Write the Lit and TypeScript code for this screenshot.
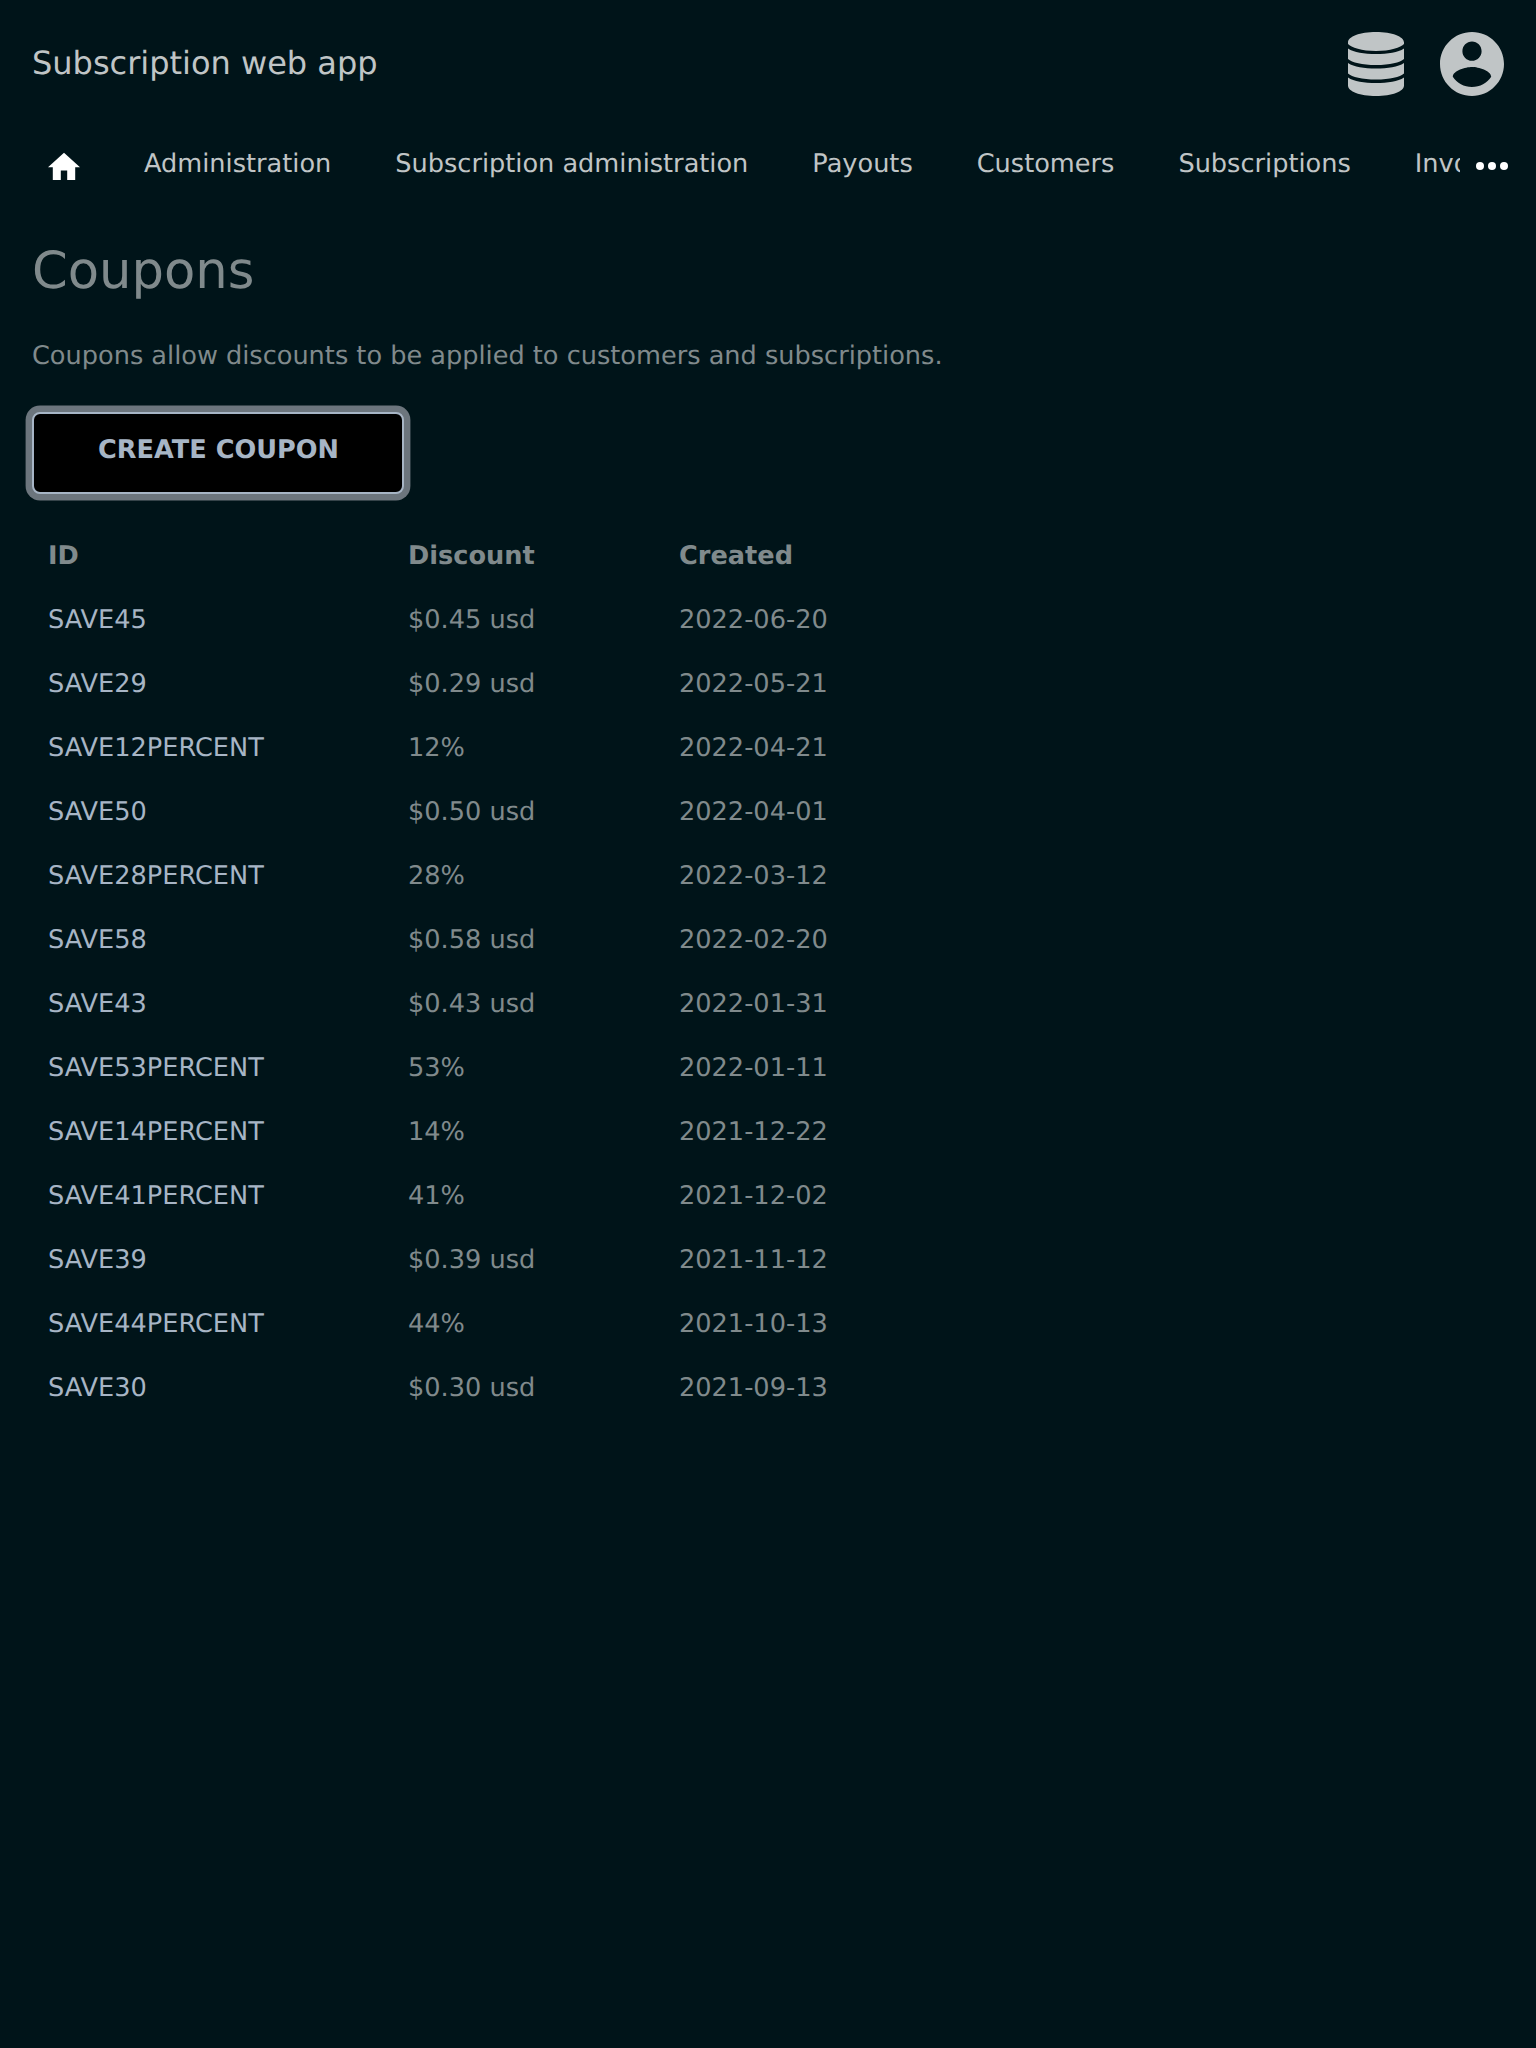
import { LitElement, html, css } from "lit";
import { customElement } from "lit/decorators.js";

const NAV = ["Administration", "Subscription administration", "Payouts", "Customers", "Subscriptions", "Invoices"];

const COUPONS: [string, string, string][] = [
  ["SAVE45", "$0.45 usd", "2022-06-20"],
  ["SAVE29", "$0.29 usd", "2022-05-21"],
  ["SAVE12PERCENT", "12%", "2022-04-21"],
  ["SAVE50", "$0.50 usd", "2022-04-01"],
  ["SAVE28PERCENT", "28%", "2022-03-12"],
  ["SAVE58", "$0.58 usd", "2022-02-20"],
  ["SAVE43", "$0.43 usd", "2022-01-31"],
  ["SAVE53PERCENT", "53%", "2022-01-11"],
  ["SAVE14PERCENT", "14%", "2021-12-22"],
  ["SAVE41PERCENT", "41%", "2021-12-02"],
  ["SAVE39", "$0.39 usd", "2021-11-12"],
  ["SAVE44PERCENT", "44%", "2021-10-13"],
  ["SAVE30", "$0.30 usd", "2021-09-13"],
];

@customElement("app-root")
export class AppRoot extends LitElement {
  static styles = css`
    :host {
      display: block;
      box-sizing: border-box;
      height: 2048px;
      overflow: hidden;
      background: #001419;
      color: #808a8c;
      font: 25.6px/32px "DejaVu Sans", sans-serif;
      text-rendering: geometricPrecision;
    }
    * { box-sizing: border-box; }
    header {
      display: flex;
      align-items: center;
      height: 128px;
      padding: 0 32px;
      color: #c0c5c6;
    }
    .brand { flex: 1; padding-bottom: 2px; font-size: 32px; }
    .icons { display: flex; gap: 32px; }
    svg { display: block; fill: currentColor; }
    nav { display: flex; height: 64px; padding: 0 24px 0 48px; color: #c0c5c6; }
    .home { flex: none; width: 32px; margin-right: 32px; padding-top: 24px; color: #fff; }
    .links { flex: none; display: flex; width: 1348px; overflow: hidden; white-space: nowrap; }
    .links span { flex: none; padding: 20px 32px 0; }
    .more { flex: none; margin: 34px 0 0 16px; color: #fff; }
    main { padding: 49px 32px 0; }
    h1 { margin: 0; font: 51.2px/60px "DejaVu Sans", sans-serif; }
    p { margin: 39px 0 0; }
    button {
      display: block;
      margin: 40px 0 0;
      width: 372px;
      height: 82px;
      padding: 0 0 6px 1px;
      border: 2px solid #a7b5c5;
      border-radius: 8px;
      background: #000;
      color: #a7b5c5;
      font: bold 25.6px/32px "DejaVu Sans", sans-serif;
      text-rendering: geometricPrecision;
      box-shadow: 0 0 0 6.4px #6c757d;
    }
    .table { margin-top: 30px; padding-left: 16px; }
    .row { display: grid; grid-template-columns: 360px 271px 1fr; height: 64px; align-items: center; }
    .head { font-weight: bold; }
    .id { color: #a7b5c5; }
  `;

  render() {
    return html`
      <header>
        <div class="brand">Subscription web app</div>
        <div class="icons">
          <svg width="64" height="64" viewBox="0 0 64 64"><path d="M4 10.5C4 4.5 16 0 32 0s28 4.5 28 10.5v1.500C57 15.500 46 19 32 19S7 15.500 4 12zM4 16.500C10 20.500 20 22 32 22s22-1.500 28-5.500v10.500C56 30.500 46 33 32 33S8 30.500 4 27zM4 31C10 35 20 36.500 32 36.500s22-1.500 28-5.500v10.500C56 45 46 47.500 32 47.500S8 45 4 41.500zM4 45.500C10 49.500 20 51 32 51s22-1.500 28-5.500v8C60 59.500 48 64 32 64S4 59.500 4 53.500z"/></svg>
          <svg width="64" height="64" viewBox="2 2 20 20"><path d="M12 2C6.48 2 2 6.48 2 12s4.48 10 10 10 10-4.480 10-10S17.520 2 12 2zm0 3c1.660 0 3 1.340 3 3s-1.340 3-3 3-3-1.340-3-3 1.340-3 3-3zm0 14.200c-2.500 0-4.710-1.280-6-3.220.030-1.990 4-3.080 6-3.080 1.990 0 5.970 1.090 6 3.080-1.290 1.940-3.500 3.220-6 3.220z"/></svg>
        </div>
      </header>
      <nav>
        <div class="home"><svg width="32" height="28" viewBox="2 2.5 20 17.5"><path d="M10 20v-6h4v6h5v-8h3L12 3 2 12h3v8z"/></svg></div>
        <div class="links">${NAV.map((n) => html`<span>${n}</span>`)}</div>
        <svg class="more" width="32" height="8" viewBox="0 0 32 8"><circle cx="4" cy="4" r="4"/><circle cx="16" cy="4" r="4"/><circle cx="28" cy="4" r="4"/></svg>
      </nav>
      <main>
        <h1>Coupons</h1>
        <p>Coupons allow discounts to be applied to customers and subscriptions.</p>
        <button>CREATE COUPON</button>
        <div class="table">
          <div class="row head"><span>ID</span><span>Discount</span><span>Created</span></div>
          ${COUPONS.map(([id, d, c]) => html`<div class="row"><span class="id">${id}</span><span>${d}</span><span>${c}</span></div>`)}
        </div>
      </main>
    `;
  }
}
